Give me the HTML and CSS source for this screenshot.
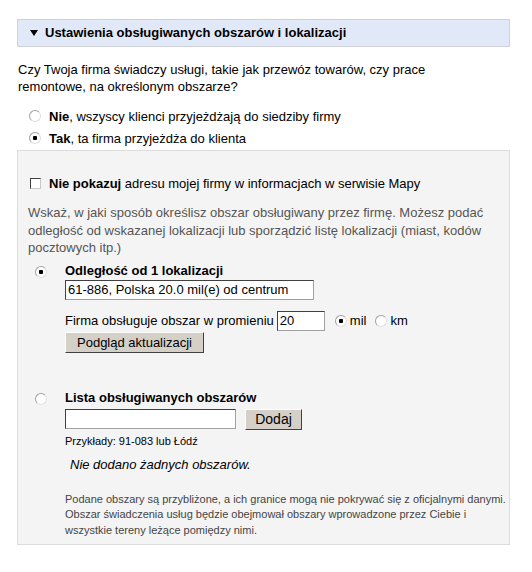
FILE: index.html
```html
<!DOCTYPE html>
<html lang="pl">
<head>
  <meta charset="UTF-8">
  <title>Ustawienia obsługiwanych obszarów</title>
  <link rel="stylesheet" href="styles.css">
</head>
<body>
  <div class="container">
    <div class="section-head">
      <span class="arrow"></span>
      Ustawienia obsługiwanych obszarów i lokalizacji
    </div>

    <p class="question">Czy Twoja firma świadczy usługi, takie jak przewóz towarów, czy prace remontowe, na określonym obszarze?</p>

    <div class="choices">
      <div class="choice">
        <input type="radio" name="serwis" class="radio">
        <span><strong>Nie</strong>, wszyscy klienci przyjeżdżają do siedziby firmy</span>
      </div>
      <div class="choice">
        <input type="radio" name="serwis" class="radio" checked>
        <span><strong>Tak</strong>, ta firma przyjeżdża do klienta</span>
      </div>
    </div>

    <div class="panel">
      <div class="hide-row">
        <input type="checkbox" class="check">
        <span><strong>Nie pokazuj</strong> adresu mojej firmy w informacjach w serwisie Mapy</span>
      </div>

      <p class="hint">Wskaż, w jaki sposób określisz obszar obsługiwany przez firmę. Możesz podać odległość od wskazanej lokalizacji lub sporządzić listę lokalizacji (miast, kodów pocztowych itp.)</p>

      <div class="option">
        <div class="option-radio"><input type="radio" name="tryb" class="radio" checked></div>
        <div class="option-body">
          <div class="option-title">Odległość od 1 lokalizacji</div>
          <input type="text" class="field field-wide" value="61-886, Polska 20.0 mil(e) od centrum">
          <div class="radius-row">
            Firma obsługuje obszar w promieniu
            <input type="text" class="field field-num" value="20">
            <label class="unit"><input type="radio" name="jedn" class="radio" checked>mil</label>
            <label class="unit"><input type="radio" name="jedn" class="radio">km</label>
          </div>
          <button class="btn">Podgląd aktualizacji</button>
        </div>
      </div>

      <div class="option option-list">
        <div class="option-radio"><input type="radio" name="tryb" class="radio"></div>
        <div class="option-body">
          <div class="option-title">Lista obsługiwanych obszarów</div>
          <div class="add-row">
            <input type="text" class="field field-area">
            <button class="btn">Dodaj</button>
          </div>
          <div class="example">Przykłady: 91-083 lub Łódź</div>
          <div class="empty">Nie dodano żadnych obszarów.</div>
          <p class="note">Podane obszary są przybliżone, a ich granice mogą nie pokrywać się z oficjalnymi danymi. Obszar świadczenia usług będzie obejmował obszary wprowadzone przez Ciebie i wszystkie tereny leżące pomiędzy nimi.</p>
        </div>
      </div>
    </div>
  </div>
</body>
</html>
```

FILE: styles.css
```css
body {
  margin: 0;
  background-color: #fff;
  font-family: Arial, "Liberation Sans", sans-serif;
  font-size: 13px;
  color: #000;
}
.container {
  margin: 19px 0 0 17px;
  width: 493px;
}
.section-head {
  box-sizing: border-box;
  height: 28px;
  background-color: #e1e9f8;
  border: 1px solid #cfd3d9;
  font-weight: bold;
  line-height: 26px;
  padding-left: 12px;
  display: flex;
  align-items: center;
}
.arrow {
  width: 0;
  height: 0;
  border-left: 4px solid transparent;
  border-right: 4px solid transparent;
  border-top: 6px solid #000;
  margin-right: 7px;
}
.question {
  margin: 14px 0 0 1px;
  line-height: 17px;
  width: 470px;
}
.choices {
  margin-top: 10px;
}
.choice {
  display: flex;
  align-items: center;
  height: 22px;
  padding-left: 12px;
}
.radio {
  appearance: none;
  -webkit-appearance: none;
  box-sizing: border-box;
  flex-shrink: 0;
  width: 12px;
  height: 12px;
  margin: 0 6px 0 0;
  border-radius: 50%;
  border: 1px solid #a0a0a0;
  border-right-color: #e0e0e0;
  border-bottom-color: #e0e0e0;
  background-color: #fff;
}
.radio:checked {
  background: radial-gradient(circle, #000 0, #000 2px, #fff 2.5px);
}
.choice .radio {
  margin-right: 8px;
}
.panel {
  box-sizing: border-box;
  margin-top: 1px;
  background-color: #f4f4f4;
  border: 1px solid #dcdcdc;
  padding: 25px 10px 6px 10px;
}
.hide-row {
  display: flex;
  align-items: center;
  margin-left: 2px;
}
.check {
  appearance: none;
  -webkit-appearance: none;
  box-sizing: border-box;
  width: 11px;
  height: 11px;
  margin: 0 8px 0 0;
  border: 1px solid #404040;
  border-right-color: #c8c8c8;
  border-bottom-color: #c8c8c8;
  background-color: #fff;
}
.hint {
  color: #555;
  line-height: 17.5px;
  margin: 13px 0 0 0;
}
.option {
  display: flex;
  margin-top: 6px;
}
.option-radio {
  flex-shrink: 0;
  width: 37px;
  padding: 3px 0 0 7px;
  box-sizing: border-box;
}
.option-title {
  font-weight: bold;
  line-height: 16px;
}
.field {
  box-sizing: border-box;
  height: 20px;
  border: 1px solid #a0a0a0;
  border-top-color: #404040;
  border-left-color: #404040;
  background-color: #fff;
  font-family: Arial, "Liberation Sans", sans-serif;
  font-size: 13px;
  padding: 0 2px;
  margin: 1px 0 0 0;
}
.field-wide {
  width: 249px;
}
.radius-row {
  display: flex;
  align-items: center;
  margin-top: 11px;
}
.field-num {
  width: 48px;
  margin: 0 10px 0 3px;
}
.unit {
  display: flex;
  align-items: center;
  margin-right: 9px;
}
.unit .radio {
  margin-right: 3px;
}
.btn {
  font-family: Arial, "Liberation Sans", sans-serif;
  font-size: 13px;
  background-color: #d4d0c8;
  border: 1px solid;
  border-color: #fff #404040 #404040 #fff;
  padding: 1px 11px;
  height: 21px;
  margin: 1px 0 0 0;
}
.option-list {
  margin-top: 37px;
}
.add-row {
  display: flex;
  align-items: center;
  margin-top: 3px;
}
.add-row .field {
  margin-top: 0;
}
.field-area {
  width: 171px;
  margin-right: 9px;
}
.add-row .btn {
  width: 57px;
  padding: 0;
  margin: 0;
  font-size: 14px;
}
.example {
  font-size: 11px;
  margin-top: 5px;
}
.empty {
  font-style: italic;
  margin: 10px 0 0 5px;
}
.note {
  font-size: 11px;
  color: #444;
  line-height: 15.5px;
  margin: 20px -12px 0 0;
}
```
